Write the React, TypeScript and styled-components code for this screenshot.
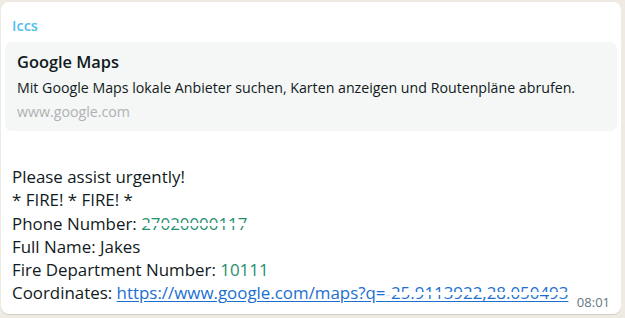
import React from "react";
import styled, { createGlobalStyle } from "styled-components";

const GlobalStyle = createGlobalStyle`
  html, body {
    margin: 0;
    padding: 0;
    background: #efeae2;
    font-family: "Open Sans", "Noto Sans", sans-serif;
    color: #111b21;
  }
`;

const Page = styled.div`
  width: 625px;
  height: 318px;
  padding: 2px 4px 4px 1px;
  box-sizing: border-box;
`;

const Bubble = styled.div`
  position: relative;
  height: 100%;
  box-sizing: border-box;
  background: #ffffff;
  border-radius: 8px;
  padding: 14px 4px 0 4px;
  box-shadow: 0 1px 0.5px rgba(11, 20, 26, 0.13);
`;

const Sender = styled.div`
  padding: 0 7px;
  font-size: 14.5px;
  line-height: 20px;
  font-weight: 600;
  color: #53bdeb;
`;

const Preview = styled.div`
  margin-top: 6px;
  background: #f5f6f6;
  border-radius: 7px;
  padding: 9px 12px 0 12px;
  height: 89px;
  box-sizing: border-box;
`;

const PreviewTitle = styled.div`
  font-size: 16.4px;
  font-weight: 600;
  line-height: 22px;
`;

const PreviewText = styled.div`
  margin-top: 3px;
  font-size: 14.2px;
  line-height: 24px;
  color: #111b21;
`;

const PreviewUrl = styled.div`
  font-size: 14.2px;
  line-height: 24px;
  color: #aeb1b3;
`;

const Body = styled.div`
  margin-top: 34px;
  padding: 0 7px;
  font-size: 16.9px;
  line-height: 23.3px;
`;

const Line = styled.div``;

const Glitched = styled.span<{ $color: string }>`
  color: ${(p) => p.$color};
  text-decoration: line-through #ffffff;
  text-decoration-thickness: 3px;
`;

const Number = styled.span`
  color: #1f8f6d;
`;

const Link = styled.a`
  color: #1b6fd1;
  text-decoration: underline;
  text-underline-offset: 2px;
`;

const Time = styled.span`
  position: absolute;
  right: 11px;
  bottom: 3px;
  font-size: 13px;
  color: #667781;
`;

export default function App() {
  return (
    <Page>
      <GlobalStyle />
      <Bubble>
        <Sender>Iccs</Sender>
        <Preview>
          <PreviewTitle>Google Maps</PreviewTitle>
          <PreviewText>
            Mit Google Maps lokale Anbieter suchen, Karten anzeigen und Routenpläne abrufen.
          </PreviewText>
          <PreviewUrl>www.google.com</PreviewUrl>
        </Preview>
        <Body>
          <Line>Please assist urgently!</Line>
          <Line>* FIRE! * FIRE! *</Line>
          <Line>
            Phone Number: <Glitched $color="#1f8f6d">27020000117</Glitched>
          </Line>
          <Line>Full Name: Jakes</Line>
          <Line>
            Fire Department Number: <Number>10111</Number>
          </Line>
          <Line>
            Coordinates:{" "}
            <Link href="#">
              https://www.google.com/maps?q=
              <Glitched $color="#1b6fd1">-25.9113922,28.050493</Glitched>
            </Link>
          </Line>
        </Body>
        <Time>08:01</Time>
      </Bubble>
    </Page>
  );
}
